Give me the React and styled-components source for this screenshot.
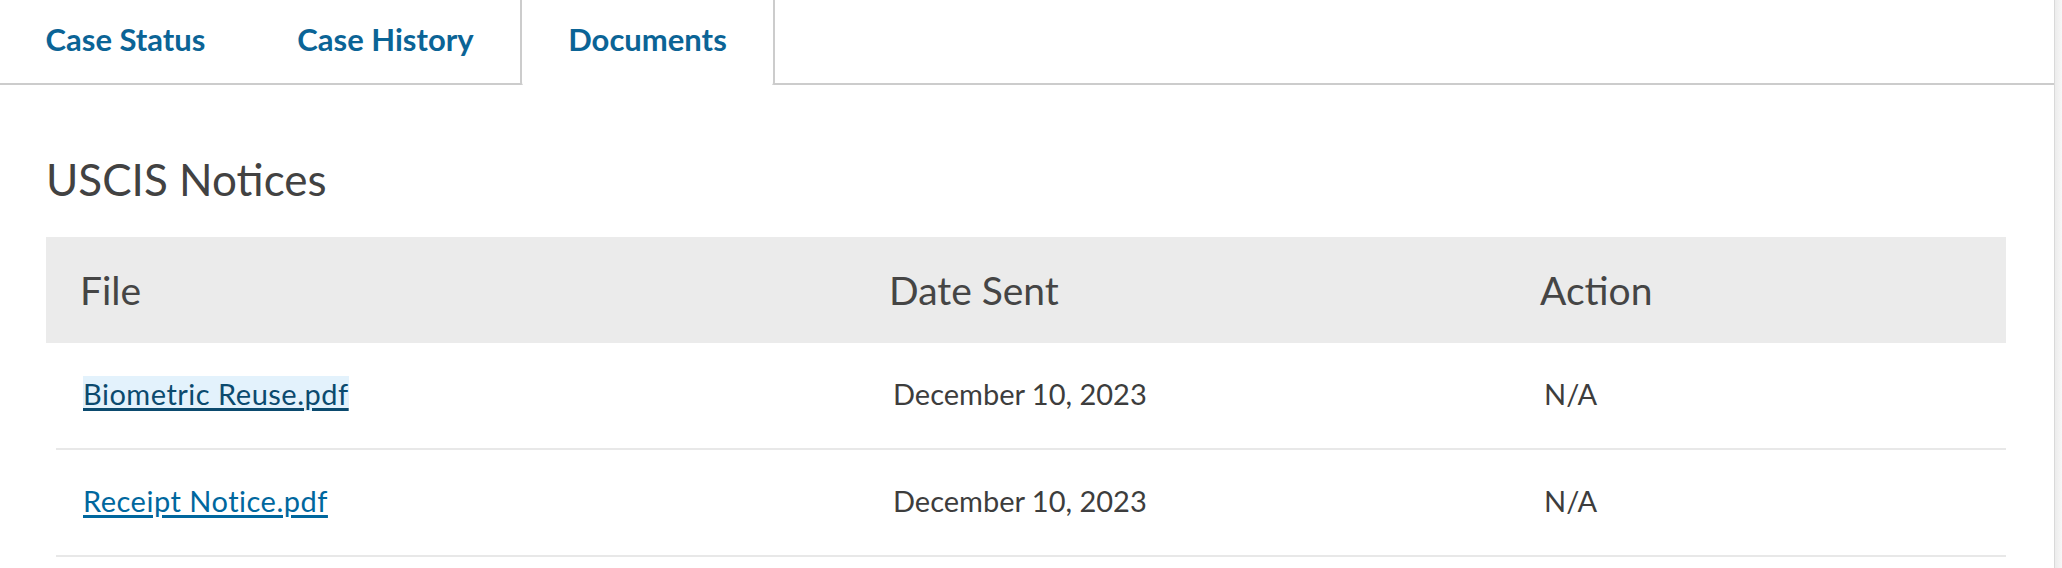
import React from 'react';
import styled, { createGlobalStyle } from 'styled-components';

const GlobalStyle = createGlobalStyle`
  html, body {
    margin: 0;
    padding: 0;
    background: #fff;
  }
  body {
    font-family: Lato, "Liberation Sans", sans-serif;
    color: #3d3d3d;
  }
`;

const Page = styled.div`
  display: flex;
  min-height: 568px;
`;

const Main = styled.div`
  flex: 1;
  border-right: 1px solid #d9d9d9;
`;

const Gutter = styled.div`
  width: 7px;
  background: linear-gradient(to right, #ececec, #f7f7f7);
`;

const TabBar = styled.nav`
  display: flex;
  height: 83px;
  border-bottom: 2px solid #cccccc;
`;

const Tab = styled.a`
  display: flex;
  align-items: center;
  justify-content: center;
  box-sizing: border-box;
  width: ${p => p.width}px;
  height: ${p => (p.active ? '85px' : '83px')};
  padding-bottom: ${p => (p.active ? '8px' : '6px')};
  font-size: 31px;
  font-weight: 700;
  color: #0b6496;
  text-decoration: none;
  background: #fff;
  border-left: ${p => (p.active ? '2px solid #cccccc' : 'none')};
  border-right: ${p => (p.active ? '2px solid #cccccc' : 'none')};
  border-radius: ${p => (p.active ? '0 0 3px 3px' : '0')};
`;

const Content = styled.section`
  padding: 0 48px 0 46px;
`;

const Title = styled.h2`
  margin: 0;
  padding-top: 66px;
  height: 152px;
  box-sizing: border-box;
  font-size: 44px;
  font-weight: 400;
  line-height: 56px;
  color: #424242;
`;

const HeaderRow = styled.div`
  display: grid;
  grid-template-columns: 809px 651px 1fr;
  height: 106px;
  align-items: center;
  background: #ebebeb;
`;

const HeaderCell = styled.div`
  padding-left: 34px;
  font-size: 39px;
  font-weight: 400;
  color: #454545;
`;

const Row = styled.div`
  display: grid;
  grid-template-columns: 810px 651px 1fr;
  height: 105px;
  align-items: center;
  margin-left: 10px;
  border-bottom: 2px solid #e8e8e8;
`;

const Cell = styled.div`
  padding-left: 27px;
  padding-bottom: 5px;
  font-size: 29px;
  color: #3d3d3d;
`;

const FileLink = styled.a`
  color: ${p => (p.focused ? '#0b4a6e' : '#00679e')};
  background: ${p => (p.focused ? '#e3f2fc' : 'transparent')};
  letter-spacing: 0.5px;
  text-decoration: underline;
  text-decoration-thickness: 3px;
  text-underline-offset: 3px;
`;

const tabs = [
  { label: 'Case Status', width: 251 },
  { label: 'Case History', width: 269 },
  { label: 'Documents', width: 255, active: true },
];

const notices = [
  { file: 'Biometric Reuse.pdf', date: 'December 10, 2023', action: 'N/A', focused: true },
  { file: 'Receipt Notice.pdf', date: 'December 10, 2023', action: 'N/A' },
];

function App() {
  return (
    <>
      <GlobalStyle />
      <Page>
        <Main>
          <TabBar>
            {tabs.map(t => (
              <Tab key={t.label} width={t.width} active={t.active}>
                {t.label}
              </Tab>
            ))}
          </TabBar>
          <Content>
            <Title>USCIS Notices</Title>
            <HeaderRow>
              <HeaderCell>File</HeaderCell>
              <HeaderCell>Date Sent</HeaderCell>
              <HeaderCell>Action</HeaderCell>
            </HeaderRow>
            {notices.map(n => (
              <Row key={n.file}>
                <Cell>
                  <FileLink href="#" focused={n.focused}>{n.file}</FileLink>
                </Cell>
                <Cell>{n.date}</Cell>
                <Cell>{n.action}</Cell>
              </Row>
            ))}
          </Content>
        </Main>
        <Gutter />
      </Page>
    </>
  );
}

export default App;
